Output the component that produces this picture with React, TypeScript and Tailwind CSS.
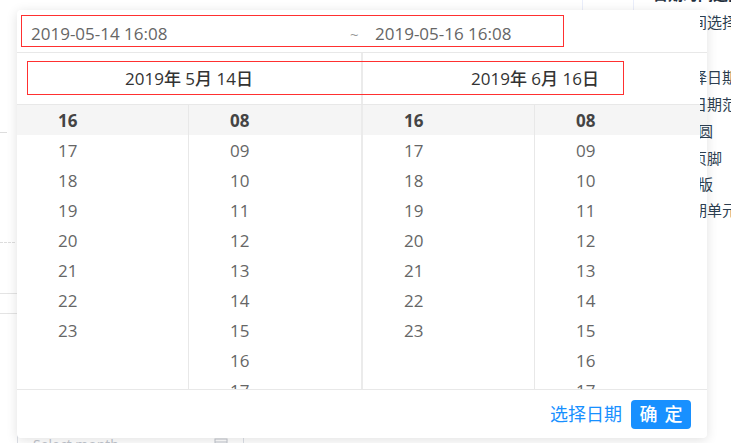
import React from "react";

const hours = ["16", "17", "18", "19", "20", "21", "22", "23"];
const minutes = ["08", "09", "10", "11", "12", "13", "14", "15", "16", "17"];

function Column({ items, first }: { items: string[]; first: boolean }) {
  return (
    <div className={first ? "w-[172px] h-full border-r border-[#e8e8e8] overflow-hidden" : "flex-1 h-full overflow-hidden"}>
      {items.map((v, i) => (
        <div
          key={v + i}
          className={
            i === 0
              ? "h-[30px] leading-[29px] pt-[1px] pl-[41px] font-bold text-[#444]"
              : "h-[30px] leading-[29px] pt-[1px] pl-[41px] text-[#666]"
          }
        >
          {v}
        </div>
      ))}
    </div>
  );
}

function Half() {
  return (
    <div className="w-[344px] h-full flex bg-white">
      <div className="flex w-full h-full relative">
        <div className="absolute left-0 right-0 top-0 h-[30px] bg-[#f5f5f5]" />
        <div className="relative flex w-full h-full">
          <Column items={hours} first />
          <Column items={minutes} first={false} />
        </div>
      </div>
    </div>
  );
}

export default function App() {
  const font = { fontFamily: '"Open Sans", "Noto Sans CJK SC", sans-serif' };
  return (
    <div className="relative w-[731px] h-[443px] bg-white overflow-hidden" style={font}>
      {/* background page fragments */}
      <div className="absolute left-[582px] top-0 w-px h-[12px] bg-[#eaeefb]" />
      <div className="absolute left-[633px] top-0 w-px h-[12px] bg-[#eaeefb]" />
      <div className="absolute left-[653px] top-[-17px] text-[15px] font-bold text-[#1f2f3d] whitespace-nowrap">日期时间选择</div>
      <div className="absolute left-0 top-[132px] w-[7px] h-px bg-[#dddddd]" />
      <div className="absolute left-0 top-[242px] w-[15px] border-t border-dashed border-[#dddddd]" />
      <div className="absolute left-0 top-[293px] w-[17px] h-px bg-[#e4e4e4]" />
      <div className="absolute left-0 top-[313px] w-[17px] h-px bg-[#e4e4e4]" />
      <div className="absolute left-[17px] top-[424px] w-[227px] h-[40px] border border-[#dcdfe6] rounded-[4px] flex items-center pl-[15px] pr-[15px] text-[14px] text-[#c0c4cc]">
        <span className="flex-1">Select month</span>
        <svg width="14" height="14" viewBox="0 0 14 14" fill="none" stroke="#c0c4cc" strokeWidth="1">
          <rect x="1" y="2" width="12" height="11" />
          <line x1="1" y1="5" x2="13" y2="5" />
        </svg>
      </div>

      {/* popup */}
      <div className="absolute left-[17px] top-[10px] w-[690px] h-[428px] bg-white rounded-[4px] shadow-[0_2px_12px_rgba(0,0,0,0.12)] flex flex-col overflow-hidden z-10">
        <div className="h-[43px] border-b border-[#e8e8e8] pt-[5px] pl-[4px] shrink-0">
          <div className="w-[543px] h-[32px] border border-[#ff3030] flex pl-[9px] pt-[8px] text-[17px] leading-[20px] text-[#666]">
            <span className="w-[319px]">2019-05-14 16:08</span>
            <span className="w-[25px] text-[#999] text-[15px]">~</span>
            <span>2019-05-16 16:08</span>
          </div>
        </div>
        <div className="relative h-[52px] border-b border-[#e8e8e8] shrink-0 flex text-[17px] font-medium text-[#333]">
          <div className="w-[344px] flex items-center justify-center">2019年 5月 14日</div>
          <div className="w-[2px] bg-[#ebebeb]" />
          <div className="w-[344px] flex items-center justify-center">2019年 6月 16日</div>
          <div className="absolute left-[10px] top-[8px] w-[597px] h-[34px] border border-[#ff3030]" />
        </div>
        <div className="h-[284px] flex shrink-0 text-[17px]">
          <Half />
          <div className="w-[2px] bg-[#ebebeb]" />
          <Half />
        </div>
        <div className="flex-1 border-t border-[#e8e8e8] flex items-center justify-end pr-[16px] gap-[9px]">
          <span className="text-[18px] text-[#1890ff]">选择日期</span>
          <button className="w-[60px] h-[29px] rounded-[4px] bg-[#1890ff] text-white text-[18px] font-medium tracking-[7px] pl-[7px] leading-[29px]">
            确定
          </button>
        </div>
      </div>

      {/* sidebar text overlapping */}
      <div className="absolute left-[700px] top-0 w-[31px] h-[443px] overflow-hidden z-20 text-[15px] text-[#2c3e50] whitespace-nowrap">
        <div className="absolute top-[11px] left-[-8px]">间选择器</div>
        <div className="absolute top-[66px] left-[-8px]">择日期时</div>
        <div className="absolute top-[93px] left-[-8px]">日期范围</div>
        <div className="absolute top-[120px] left-[-2px]">圆</div>
        <div className="absolute top-[147px] left-[-8px]">页脚</div>
        <div className="absolute top-[173px] left-[-2px]">版</div>
        <div className="absolute top-[199px] left-[-8px]">期单元格</div>
      </div>
    </div>
  );
}
